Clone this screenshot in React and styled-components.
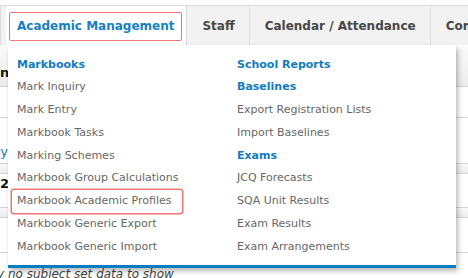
import React from 'react'
import styled, { createGlobalStyle } from 'styled-components'

const GlobalStyle = createGlobalStyle`
  html, body { margin: 0; padding: 0; background: #fff; }
  body { font-family: "DejaVu Sans", Verdana, sans-serif; overflow: hidden; }
`

const Page = styled.div`
  width: 468px;
  height: 278px;
  position: relative;
  overflow: hidden;
  padding-top: 5px;
  box-sizing: border-box;
`

const NavBar = styled.nav`
  display: flex;
  height: 39px;
  background: #f2f2f2;
  border-top: 1px solid #dcdcdc;
`

const Stub = styled.div`
  width: 2px;
  border-right: 1px solid #dcdcdc;
  margin-right: 5px;
`

const Tab = styled.div`
  display: flex;
  align-items: center;
  flex-shrink: 0;
  white-space: nowrap;
  font-size: 12px;
  font-weight: bold;
  color: ${p => (p.active ? '#1580c5' : '#474747')};
  background: ${p => (p.active ? '#fff' : 'transparent')};
  border-left: ${p => (p.active ? 'none' : '1px solid #dcdcdc')};
  padding: ${p => (p.active ? '0 4px 0 3px' : '0 14px 0 15px')};
`

const Marked = styled.span`
  display: flex;
  align-items: center;
  height: 27px;
  padding: 0 7px 0 7px;
  border: 1.5px solid #f07575;
  border-radius: 2px;
  margin-top: 1px;
`

const Body = styled.div`
  position: relative;
`

const Row = styled.div`
  display: flex;
  align-items: ${p => p.align || 'flex-end'};
  height: ${p => p.h}px;
  border-bottom: ${p => (p.line ? '1px solid #d6d6d6' : 'none')};
  background: ${p => (p.shade ? 'linear-gradient(#fafafa, #ececec)' : '#fff')};
`

const LeftCell = styled.div`
  width: 8px;
  text-align: right;
  white-space: nowrap;
  font-size: 13px;
  font-weight: ${p => (p.link ? 'normal' : 'bold')};
  color: ${p => (p.link ? '#1580c5' : '#111')};
  padding-bottom: ${p => p.pb || 0}px;
  padding-top: ${p => p.pt || 0}px;
`

const Note = styled.div`
  padding-top: 14px;
  font-size: 12px;
  font-style: italic;
  color: #444;
  white-space: nowrap;
  margin-left: -3px;
`

const Dropdown = styled.div`
  position: absolute;
  top: 0;
  left: 8px;
  width: 448px;
  background: #fff;
  box-shadow: 2px 3px 5px rgba(0, 0, 0, 0.28);
  border-bottom: 3px solid #0a7cc2;
  padding: 8.5px 0 7px 9px;
  box-sizing: border-box;
  display: grid;
  grid-template-columns: 220px 1fr;
`

const Column = styled.ul`
  list-style: none;
  margin: 0;
  padding: 0;
`

const Heading = styled.li`
  height: 22.75px;
  line-height: 22.75px;
  font-size: 11px;
  font-weight: bold;
  color: #0f7cc0;
  white-space: nowrap;
`

const Item = styled.li`
  height: 22.75px;
  line-height: 22.75px;
  font-size: 11px;
  color: #676767;
  white-space: nowrap;
  ${p =>
    p.marked &&
    `
    margin-left: -5px;
    padding-left: 5px;
    width: 170px;
    box-sizing: border-box;
    box-shadow: 0 0 0 1.5px #f07575;
    border-radius: 2px;
  `}
`

const left = [
  { h: 'Markbooks' },
  'Mark Inquiry',
  'Mark Entry',
  'Markbook Tasks',
  'Marking Schemes',
  'Markbook Group Calculations',
  { t: 'Markbook Academic Profiles', marked: true },
  'Markbook Generic Export',
  'Markbook Generic Import',
]

const right = [
  { h: 'School Reports' },
  { h: 'Baselines' },
  'Export Registration Lists',
  'Import Baselines',
  { h: 'Exams' },
  'JCQ Forecasts',
  'SQA Unit Results',
  'Exam Results',
  'Exam Arrangements',
]

const renderList = list =>
  list.map((e, i) => {
    if (typeof e === 'string') return <Item key={i}>{e}</Item>
    if (e.h) return <Heading key={i}>{e.h}</Heading>
    return (
      <Item key={i} marked={e.marked}>
        {e.t}
      </Item>
    )
  })

const App = () => {
  return (
    <>
      <GlobalStyle />
      <Page>
        <NavBar>
          <Stub />
          <Tab active>
            <Marked>Academic Management</Marked>
          </Tab>
          <Tab>Staff</Tab>
          <Tab>Calendar / Attendance</Tab>
          <Tab>Communication</Tab>
        </NavBar>
        <Body>
          <Row h={2} />
          <Row h={39} shade line>
            <LeftCell pb={6}>n</LeftCell>
          </Row>
          <Row h={30} line />
          <Row h={45} line>
            <LeftCell link pb={4}>y</LeftCell>
          </Row>
          <Row h={9} shade line />
          <Row h={33} line align="flex-start">
            <LeftCell pt={2}>2</LeftCell>
          </Row>
          <Row h={9} shade line />
          <Row h={34} line />
          <Note>y no subject set data to show</Note>
          <Dropdown>
            <Column>{renderList(left)}</Column>
            <Column>{renderList(right)}</Column>
          </Dropdown>
        </Body>
      </Page>
    </>
  )
}

export default App
